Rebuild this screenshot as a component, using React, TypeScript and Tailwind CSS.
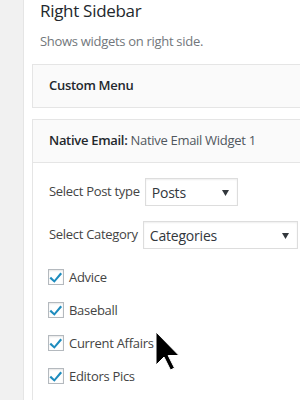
const CATEGORIES = ['Advice', 'Baseball', 'Current Affairs', 'Editors Pics']

function Checkbox() {
  return (
    <span className="flex h-4 w-4 shrink-0 items-center justify-center border border-[#b4b9be] bg-white shadow-[inset_0_1px_2px_rgba(0,0,0,0.1)]">
      <svg viewBox="0 0 16 16" className="h-[16px] w-[16px]">
        <path d="M2.3 7.8l3.7 3.5 7-8.4 1.9 1.6-8.7 10.1-5.6-5z" fill="#1e8cbe" />
      </svg>
    </span>
  )
}

function Select({ value, width }: { value: string; width: string }) {
  return (
    <div className={`flex h-7 shrink-0 items-center justify-between border border-[#ddd] bg-white pl-[6px] pr-[8px] text-[14px] tracking-[-0.2px] text-[#32373c] shadow-[inset_0_1px_2px_rgba(0,0,0,0.07)] ${width}`}>
      <span>{value}</span>
      <svg viewBox="0 0 8 8" className="h-[7px] w-[7px]">
        <path d="M0 1h8L4 8z" fill="#32373c" />
      </svg>
    </div>
  )
}

export default function App() {
  return (
    <div
      className="relative flex h-[400px] w-[300px] overflow-hidden bg-[#f1f1f1] tracking-[-0.3px]"
      style={{ fontFamily: '"Open Sans", "Noto Sans", sans-serif' }}
    >
      <div className="ml-[23px] flex-1 border-l border-[#e5e5e5] bg-white pl-2">
        <div className="pl-2">
          <h2 className="text-[17px] leading-[22px] text-[#23282d]">Right Sidebar</h2>
          <p className="mt-[9px] text-[13px] leading-[20px] text-[#72777c]">Shows widgets on right side.</p>
        </div>

        <div className="-mr-4 mt-[13px] flex h-[44px] items-center border border-[#e5e5e5] bg-[#fafafa] pl-4">
          <h3 className="text-[13px] font-semibold text-[#23282d]">Custom Menu</h3>
        </div>

        <div className="-mr-4 mt-[11px] border border-[#e5e5e5]">
          <div className="flex h-[43px] items-center border-b border-[#e5e5e5] bg-[#fafafa] pl-4">
            <h3 className="text-[13px] font-semibold text-[#23282d]">
              Native Email: <span className="font-normal text-[#50575e]">Native Email Widget 1</span>
            </h3>
          </div>
          <div className="pl-4 pt-[15px] text-[13px] text-[#444]">
            <div className="flex items-center gap-[5px]">
              <span>Select Post type</span>
              <Select value="Posts" width="w-[93px]" />
            </div>
            <div className="mt-[15px] flex items-center gap-[5px]">
              <span>Select Category</span>
              <Select value="Categories" width="w-[155px]" />
            </div>
            <ul className="-ml-px mt-[20px] flex flex-col gap-[17px] pb-4">
              {CATEGORIES.map((c) => (
                <li key={c} className="flex h-4 items-center gap-[5px] leading-4">
                  <Checkbox />
                  <span>{c}</span>
                </li>
              ))}
            </ul>
          </div>
        </div>
      </div>

      {/* mouse pointer over the list */}
      <svg viewBox="0 0 25 41" className="absolute left-[155px] top-[331px] h-[41px] w-[25px]">
        <path d="M1 1v33l8-8 6.5 13 4-2-6.3-12.5H24z" fill="#000" stroke="#fff" strokeWidth="1" />
      </svg>
    </div>
  )
}
